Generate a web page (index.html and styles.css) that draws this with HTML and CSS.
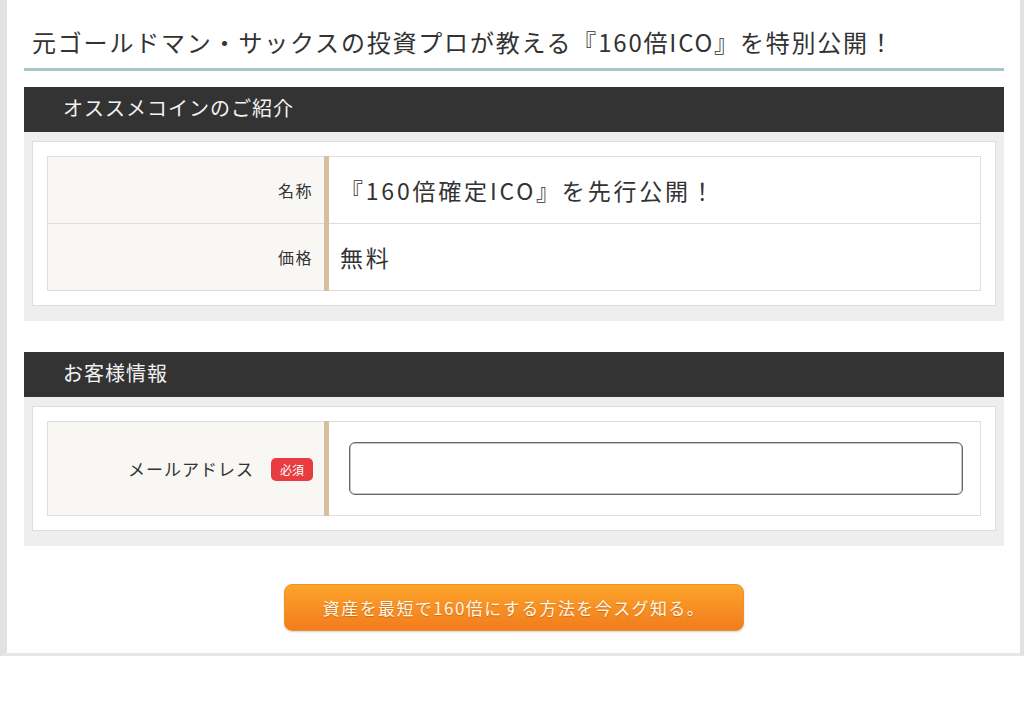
FILE: index.html
```html
<!DOCTYPE html>
<html lang="ja">
<head>
  <meta charset="UTF-8">
  <meta name="viewport" content="width=device-width, initial-scale=1.0">
  <title>160倍ICO 特別公開</title>
  <link rel="stylesheet" href="styles.css">
</head>
<body>
  <div class="page">
    <h1 class="page-title">元ゴールドマン・サックスの投資プロが教える『160倍ICO』を特別公開！</h1>

    <section class="block">
      <h2 class="block-head">オススメコインのご紹介</h2>
      <div class="block-body">
        <div class="block-inner">
          <table class="info-table">
            <tr>
              <th>名称</th>
              <td class="value">『160倍確定ICO』を先行公開！</td>
            </tr>
            <tr>
              <th>価格</th>
              <td class="value">無料</td>
            </tr>
          </table>
        </div>
      </div>
    </section>

    <section class="block">
      <h2 class="block-head">お客様情報</h2>
      <div class="block-body">
        <div class="block-inner">
          <table class="info-table form-table">
            <tr>
              <th>メールアドレス<span class="required">必須</span></th>
              <td><input type="email" class="text-input" name="email"></td>
            </tr>
          </table>
        </div>
      </div>
    </section>

    <div class="submit-area">
      <button type="submit" class="submit-btn">資産を最短で160倍にする方法を今スグ知る。</button>
    </div>
  </div>
</body>
</html>
```

FILE: styles.css
```css
:root {
  --text: #333333;
  --dark: #333333;
  --panel: #eeeeee;
  --line: #dddddd;
  --label-bg: #f8f7f4;
  --accent: #d5bf9f;
  --teal: #a6c6ca;
}

* {
  margin: 0;
  padding: 0;
  box-sizing: border-box;
}

body {
  font-family: "Noto Sans CJK JP", "Noto Sans", sans-serif;
  color: var(--text);
  background: #ffffff;
}

.page {
  width: 1024px;
  border-left: 7px solid #e2e2e2;
  border-right: 4px solid #e2e2e2;
  border-bottom: 3px solid #e6e6e6;
  padding: 0 16px 22px 17px;
}

.page-title {
  font-size: 24px;
  font-weight: normal;
  line-height: 32px;
  letter-spacing: 1.8px;
  padding: 26px 8px 10px;
  border-bottom: 3px solid var(--teal);
  margin-bottom: 16px;
  white-space: nowrap;
}

.block {
  margin-bottom: 31px;
}

.block:last-of-type {
  margin-bottom: 38px;
}

.block-head {
  background: var(--dark);
  color: #f2f2f2;
  font-size: 20px;
  font-weight: normal;
  letter-spacing: 1px;
  height: 45px;
  line-height: 42px;
  padding-left: 39px;
}

.block-body {
  background: var(--panel);
  padding: 9px 8px 15px;
}

.block-inner {
  background: #ffffff;
  border: 1px solid var(--line);
  padding: 14px;
}

.info-table {
  width: 100%;
  border-collapse: collapse;
}

.info-table th,
.info-table td {
  border: 1px solid var(--line);
  height: 67px;
}

.info-table th {
  width: 279px;
  background: var(--label-bg);
  border-right: 5px solid var(--accent);
  text-align: right;
  font-size: 16px;
  font-weight: normal;
  letter-spacing: 1.5px;
  padding-right: 11px;
}

.info-table .value {
  font-size: 23px;
  letter-spacing: 2.8px;
  padding-left: 11px;
}

.form-table th,
.form-table td {
  height: 94px;
}

.form-table th {
  font-size: 17px;
  letter-spacing: 1px;
}

.required {
  display: inline-block;
  background: #e93c40;
  color: #ffffff;
  font-size: 12px;
  letter-spacing: 0;
  line-height: 23px;
  padding: 0 9px;
  border-radius: 5px;
  margin-left: 17px;
  vertical-align: 1px;
}

.form-table td {
  padding: 0 17px 0 20px;
}

.text-input {
  display: block;
  width: 100%;
  height: 53px;
  border: 1px solid #6a6a6a;
  border-radius: 6px;
  box-shadow: inset 0 0 0 0.5px #8a8a8a;
  font-size: 18px;
  padding: 0 12px;
  background: #ffffff;
}

.submit-area {
  display: flex;
  justify-content: center;
}

.submit-btn {
  width: 460px;
  height: 47px;
  border: 1px solid #e9932e;
  border-radius: 8px;
  background: linear-gradient(#fca42b, #f27c1c);
  box-shadow: 0 1px 2px rgba(0, 0, 0, 0.18);
  color: #fff7e8;
  font-family: "Noto Sans CJK JP", sans-serif;
  font-size: 17px;
  letter-spacing: 1.4px;
  text-shadow: 0 1px 1px rgba(150, 70, 0, 0.45);
  cursor: pointer;
}
```
